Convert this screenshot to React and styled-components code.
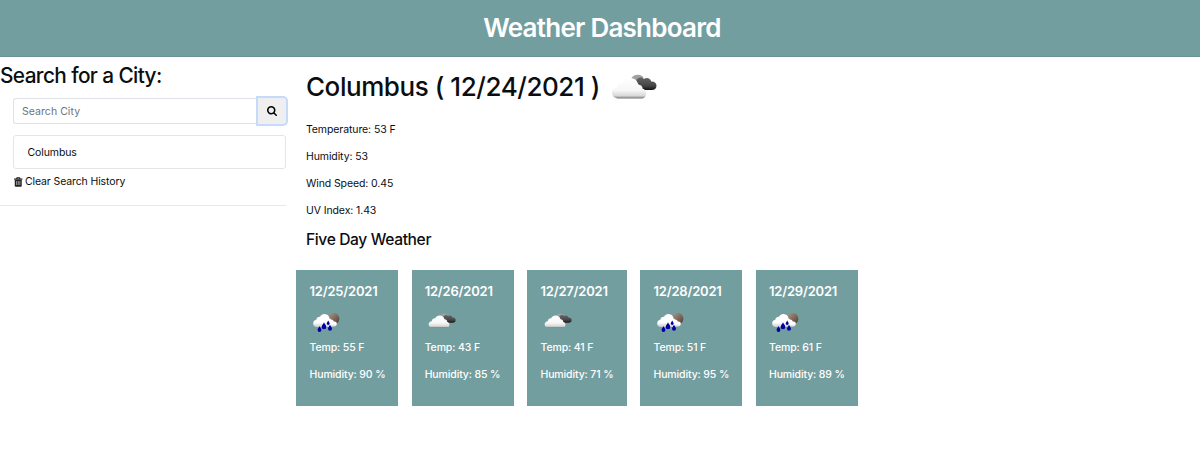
import React from 'react';
import styled, { createGlobalStyle } from 'styled-components';

const teal = '#739e9f';

const Global = createGlobalStyle`
  *, *::before, *::after { box-sizing: border-box; }
  body { margin: 0; background: #fff; color: #0b0e11; font: 400 10.5px/16px Inter, "Liberation Sans", sans-serif; }
  h1, h2, h3, h4, p { margin: 0; }
`;
const Header = styled.header`
  height: 57px; padding-top: 12px; text-align: center; color: #fff;
  background: ${teal}; border-bottom: 1px solid #689496;
`;
const Title = styled.h1`font-size: 26px; line-height: 32px; font-weight: ${p => p.$weight || 500}; letter-spacing: ${p => p.$track || 0}px; padding-left: ${p => p.$inset || 0}px;`;
const Main = styled.main`display: flex; align-items: flex-start;`;
const Sidebar = styled.aside`width: 286.4px; height: 149px; padding-top: 6px; border-bottom: 1px solid #e8e8e8;`;
const SearchTitle = styled.h2`font-size: 20.8px; line-height: 25px; font-weight: 500; letter-spacing: -0.6px; white-space: nowrap;`;
const SearchBar = styled.form`display: flex; margin: 10px 0 0 13px; height: 26px;`;
const Input = styled.input`
  flex: 1; min-width: 0; border: 1px solid #dee1e5; border-right: 0; border-radius: 3px 0 0 3px;
  padding: 1px 8px 0 8px; font: inherit; letter-spacing: 0.05px; background: #fff; outline: 0;
  &::placeholder { color: #6c757d; opacity: 1; }
`;
const SearchButton = styled.button`
  width: 28px; border: 0; padding: 0; background: #efefef; border-radius: 0 3px 3px 0;
  box-shadow: 0 0 0 2px #c6dbfc; display: flex; align-items: center; justify-content: center;
`;
const HistoryItem = styled.div`
  margin: 11px 0 0 13px; height: 34px; padding: 9px 13.5px; border: 1px solid #e5e5e5; border-radius: 3px; letter-spacing: -0.1px;
`;
const Clear = styled.div`display: flex; align-items: center; gap: 2.5px; margin: 5px 0 0 14px; letter-spacing: -0.12px;`;
const Content = styled.section`padding: 13px 0 0 19.6px;`;
const CityRow = styled.div`display: flex; align-items: center; height: 33px; gap: 11px;`;
const Details = styled.div`display: grid; gap: 11px; margin: 19px 0 0; letter-spacing: -0.1px;`;
const ForecastTitle = styled.h3`margin: 10px 0 0; padding-top: 1px; font-size: 15.6px; line-height: 20px; font-weight: 500; letter-spacing: -0.37px;`;
const Cards = styled.div`display: flex; gap: 13.5px; margin: 20px 0 0 -9.5px;`;
const Card = styled.article`
  width: ${p => p.$width}px; height: 136px; padding: 13px; background: ${teal}; color: #fff; font-weight: 500; white-space: nowrap;
`;
const CardDate = styled.h4`font-size: 13px; line-height: 17px; font-weight: 600; letter-spacing: -0.2px;`;
const CardIcon = styled.div`height: 40px; padding: ${p => p.$top}px 0 0 3.5px; line-height: 0;`;
const CardLine = styled.p`line-height: 16px; margin-bottom: 11px; letter-spacing: -0.12px;`;

const cloudPath = 'M8 24.5C3.8 24.5 1 22 1 18.7c0-3 2.5-5 5-5.2C6.5 10 9 8.4 11.7 8.6 13.3 5.6 16 4 19 4c4.5 0 7.4 2.8 8 6.4 3 .2 4.7 2 4.7 4.4 2.2.5 3.5 2.3 3.5 4.6 0 3-2 5.1-5.2 5.1z';

function Clouds({ id, width }) {
  return (
    <svg width={width} height={width * 26 / 46} viewBox="0 0 46 26" aria-label="Cloudy">
      <defs>
        <linearGradient id={id + 'w'} x1="0" y1="0" x2="0" y2="1">
          <stop offset="0" stopColor="#fff" /><stop offset=".6" stopColor="#f6f6f6" /><stop offset=".87" stopColor="#d8d8d8" /><stop offset="1" stopColor="#747474" />
        </linearGradient>
        <linearGradient id={id + 'd'} x1="0" y1="0" x2="0" y2="1">
          <stop offset="0" stopColor="#666" /><stop offset=".65" stopColor="#454545" /><stop offset="1" stopColor="#161616" />
        </linearGradient>
      </defs>
      <path d="M20 5C21.5 2 24 .8 26.5.8c3 0 5 1.2 6 3.2L31 8z" fill="#a0a0a0" />
      <path d="M25 6.5C27 2.8 31 2.5 33 5c2.4-2 6.6-1 7.2 2.4C43.5 7.2 45.5 9 45.5 11.5c0 3-2 4.5-4.7 4.5h-9L27 10z" fill={`url(#${id}d)`} />
      <path d={cloudPath} fill={`url(#${id}w)`} />
    </svg>
  );
}

const Drop = ({ x, y, s = 1 }) => (
  <path transform={`translate(${x} ${y}) scale(${s})`} d="M0-3.2C.5-1.8 2.1-.4 2.1 1.1a2.1 2.1 0 0 1-4.2 0C-2.1-.4-.5-1.8 0-3.2z" fill="#00009f" />
);

function Rain({ id }) {
  return (
    <svg width="28" height="20" viewBox="0 0 28 20" aria-label="Rain">
      <defs>
        <linearGradient id={id + 'm'} x1="0" y1="0" x2="1" y2="1">
          <stop offset="0" stopColor="#ad9f91" /><stop offset=".5" stopColor="#806d5e" /><stop offset="1" stopColor="#453b33" />
        </linearGradient>
        <linearGradient id={id + 'c'} x1="0" y1="0" x2="0" y2="1">
          <stop offset=".65" stopColor="#fff" /><stop offset="1" stopColor="#c9cccc" />
        </linearGradient>
      </defs>
      <circle cx="20.4" cy="6.7" r="6" fill={`url(#${id}m)`} />
      <path d="M14 14.7C12 12 13 8.5 16 8.6c1.2-2 4.2-1.4 4.8.9 2.3-.2 3.3 1.2 3 2.7-.2 1.6-1.3 2.5-3 2.5z" fill={`url(#${id}c)`} />
      <path d="M4 15C1.5 15-.1 13.3.2 11 .4 9.1 1.5 8 3.3 7.7 3.7 5.6 5.3 4.7 7 4.8 8.2 2.6 9.7 1.9 11.5 2c3 .1 4.7 2 5 4.5 1.5.4 2 1.5 1.5 3L16 15z" fill={`url(#${id}c)`} />
      <Drop x={6.5} y={17} s={.9} /><Drop x={11} y={13.8} s={1.1} /><Drop x={15.2} y={10.8} s={.7} /><Drop x={17} y={15.8} s={.95} />
    </svg>
  );
}

const SearchIcon = () => (
  <svg width="10" height="10" viewBox="64 128 1664 1664" fill="#000">
    <path d="M1216 832q0-185-131.5-316.5t-316.5-131.5-316.5 131.5-131.5 316.5 131.5 316.5 316.5 131.5 316.5-131.5 131.5-316.5zm512 832q0 52-38 90t-90 38q-54 0-90-38l-343-342q-179 124-399 124-143 0-273.5-55.5t-225-150-150-225-55.5-273.5 55.5-273.5 150-225 225-150 273.5-55.5 273.5 55.5 225 150 150 225 55.5 273.5q0 220-124 399l343 343q37 37 37 90z" />
  </svg>
);
const TrashIcon = () => (
  <svg width="8.5" height="10" viewBox="0 0 17 20">
    <path d="M5.5 4V1.5h6V4M0 4h17" fill="none" stroke="#111" strokeWidth="2" />
    <path d="M1.5 5h14v12.5q0 2-2 2h-10q-2 0-2-2z" fill="#222" />
    <path d="M5.2 8v8M8.5 8v8M11.8 8v8" stroke="#ccc" strokeWidth="1.4" />
  </svg>
);

const days = [
  { date: '12/25/2021', rain: true, temp: 55, humidity: 90, width: 101.7 },
  { date: '12/26/2021', rain: false, temp: 43, humidity: 85, width: 102.3 },
  { date: '12/27/2021', rain: false, temp: 41, humidity: 71, width: 99.5 },
  { date: '12/28/2021', rain: true, temp: 51, humidity: 95, width: 102 },
  { date: '12/29/2021', rain: true, temp: 61, humidity: 89, width: 102 },
];

export default function App() {
  return (
    <>
      <Global />
      <Header><Title $track={-0.75} $inset={4} $weight={600}>Weather Dashboard</Title></Header>
      <Main>
        <Sidebar>
          <SearchTitle>Search for a City:</SearchTitle>
          <SearchBar>
            <Input placeholder="Search City" />
            <SearchButton type="button" aria-label="Search"><SearchIcon /></SearchButton>
          </SearchBar>
          <HistoryItem>Columbus</HistoryItem>
          <Clear><TrashIcon />Clear Search History</Clear>
        </Sidebar>
        <Content>
          <CityRow><Title $track={-0.44}>Columbus ( 12/24/2021 )</Title><Clouds id="now" width={46} /></CityRow>
          <Details>
            <p>Temperature: 53 F</p>
            <p>Humidity: 53</p>
            <p>Wind Speed: 0.45</p>
            <p>UV Index: 1.43</p>
          </Details>
          <ForecastTitle>Five Day Weather</ForecastTitle>
          <Cards>
            {days.map((d, i) => (
              <Card key={d.date} $width={d.width}>
                <CardDate>{d.date}</CardDate>
                <CardIcon $top={d.rain ? 11.5 : 13}>{d.rain ? <Rain id={`day${i}`} /> : <Clouds id={`day${i}`} width={28} />}</CardIcon>
                <CardLine>Temp: {d.temp} F</CardLine>
                <CardLine>Humidity: {d.humidity} %</CardLine>
              </Card>
            ))}
          </Cards>
        </Content>
      </Main>
    </>
  );
}
